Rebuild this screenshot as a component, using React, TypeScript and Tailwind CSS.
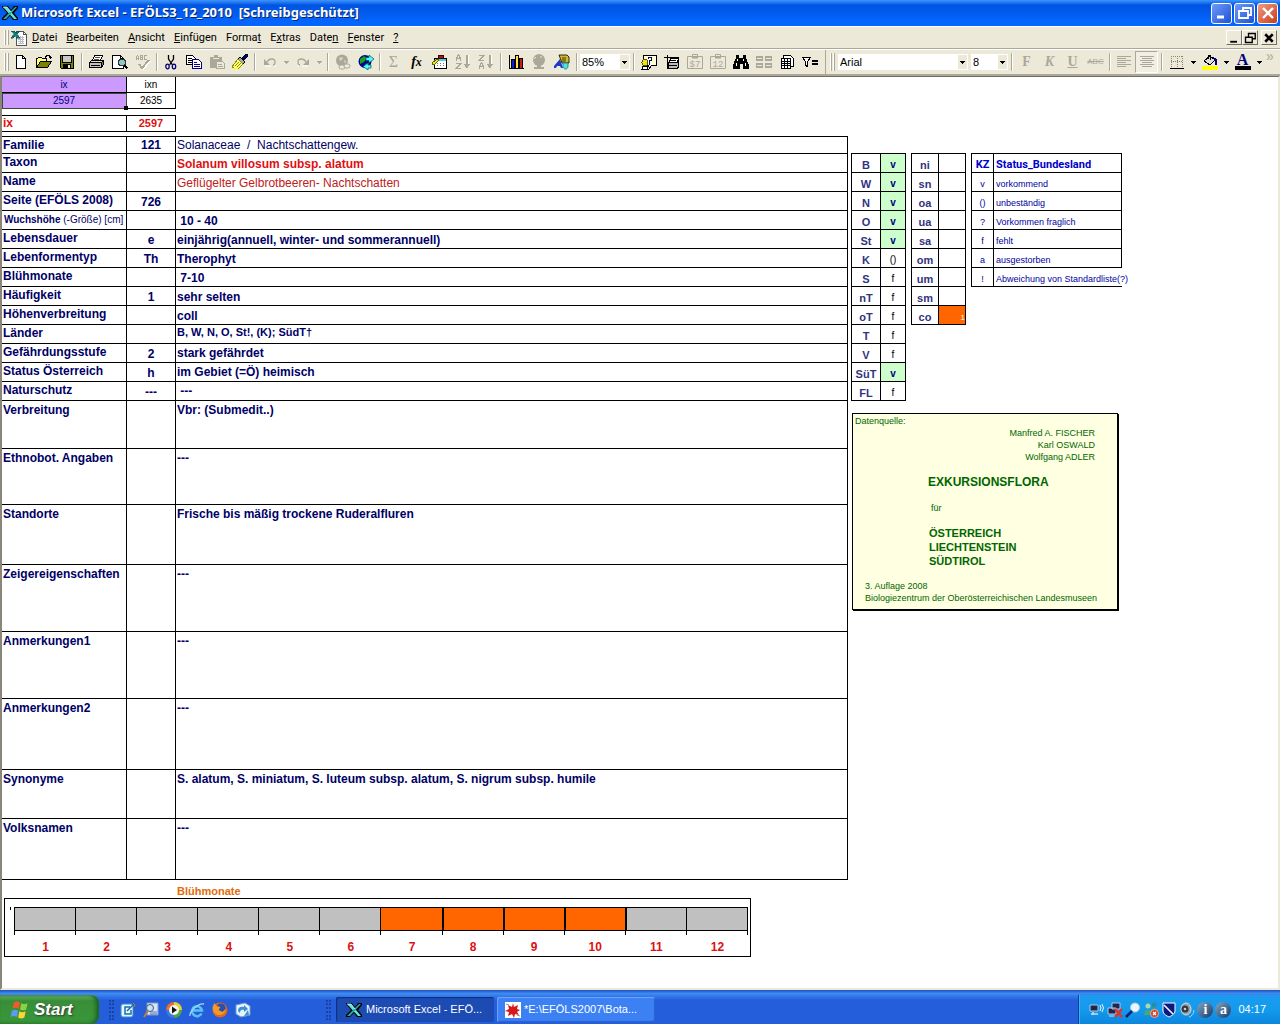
import type { ReactNode } from 'react';
import clsx from 'clsx';

type IconProps = { children: ReactNode; size?: string; smooth?: boolean };

const Icon = ({ children, size = 'size-4', smooth = false }: IconProps) => (
  <svg
    viewBox="0 0 16 16"
    className={clsx('shrink-0', size)}
    shapeRendering={smooth ? 'auto' : 'crispEdges'}
    fill="none"
    aria-hidden="true"
  >
    {children}
  </svg>
);

const ExcelLogo = () => (
  <Icon smooth>
    <path d="M0 1h6l3 4 3-4h4v2l-4 5 4 5v2h-5l-3-4-4 4H0v-2l5-5-5-6z" fill="#000" />
    <path d="M1 2h4l10 12h-3z" fill="#5fe6d8" />
    <path d="M13 2h2L4 14H1z" fill="#2aa8a4" />
    <path d="M1 2h4l4 5" stroke="#cff" strokeWidth=".8" />
  </Icon>
);

const BookIcon = () => (
  <Icon>
    <path d="M5 1h7l3 3v11H5z" fill="#fff" stroke="#555" />
    <path d="M12 1v3h3" stroke="#555" />
    <path d="M7 7h6M7 9h6M7 11h6M7 13h6M9 6v8M11 6v8" stroke="#b9bdc4" />
    <path d="M0 1h3l2 2 2-2h2L6 4l3 4H6L4 6 2 8H0l3-4z" fill="#0d8080" stroke="#003c3c" strokeWidth=".5" />
  </Icon>
);

const NewIcon = () => (
  <Icon>
    <path d="M3.5 1.5h6l3 3v10h-9z" fill="#fff" stroke="#000" />
    <path d="M9.5 1.5v3h3" stroke="#000" />
  </Icon>
);

const OpenIcon = () => (
  <Icon>
    <path d="M.5 13.5v-9h1l1-1h3l1 1h4v3" fill="#ffff80" stroke="#000" />
    <path d="M.5 13.5l4-6h11l-4 6z" fill="#808000" stroke="#000" />
    <path d="M9.5 3.5v-1h1v-1h3v1h1v2M12.5 3.5h3" stroke="#000" />
  </Icon>
);

const SaveIcon = () => (
  <Icon>
    <path d="M1.5 1.5h13v13h-12l-1-1z" fill="#808000" stroke="#000" />
    <path d="M4 2h8v6H4z" fill="#c8c8c8" />
    <path d="M4 10h8v5H4z" fill="#000" />
    <path d="M9 11h2v3H9z" fill="#e8e8e8" />
    <path d="M3.5 2v6.5h9V2" stroke="#000" />
  </Icon>
);

const PrintIcon = () => (
  <Icon>
    <path d="M5.5 1.5h8l-2 5h-8z" fill="#fff" stroke="#000" />
    <path d="M6 3.5h5M5 5.5h5" stroke="#555" />
    <path d="M.5 8.5l2-2h12l-2 2z" fill="#ddd" stroke="#000" />
    <path d="M.5 8.5h12v5H.5z" fill="#c0c0c0" stroke="#000" />
    <path d="M12.5 8.5l2-2v4l-2 3z" fill="#808080" stroke="#000" />
    <path d="M2 11.5h9" stroke="#000" />
    <path d="M9 9.5h2" stroke="#cc0" />
  </Icon>
);

const PreviewIcon = () => (
  <Icon>
    <path d="M.5 1.5h8l3 3v10H.5z" fill="#fff" stroke="#000" />
    <path d="M8.5 1.5v3h3" stroke="#000" />
    <circle cx="10" cy="8.5" r="3.5" fill="#8fc7c7" stroke="#333" />
    <path d="M12.5 11.5l3 3" stroke="#000" strokeWidth="2" />
  </Icon>
);

const SpellIcon = () => (
  <Icon>
    <path
      d="M1.5 6V2.5l1-1 1 1V6M1.5 4.5h2M5.5 1v5M5.5 1.5h2v4h-2M5.5 3.5h2M12 1.5H9.5v4H12"
      stroke="#aca899"
    />
    <path d="M5 11l3 4 7-8" stroke="#fff" strokeWidth="2" />
    <path d="M4 10l3 4 7-8" stroke="#aca899" strokeWidth="2" />
  </Icon>
);

const CutIcon = () => (
  <Icon smooth>
    <path d="M5.5 1v4l4 6M10.5 1v4l-4 6" stroke="#000" strokeWidth="1.3" />
    <ellipse cx="4.5" cy="12.5" rx="1.7" ry="2.3" stroke="#000080" strokeWidth="1.3" />
    <ellipse cx="11" cy="12.5" rx="1.7" ry="2.3" stroke="#000080" strokeWidth="1.3" />
  </Icon>
);

const CopyIcon = () => (
  <Icon>
    <path d="M.5 1.5h6l3 3v6h-9z" fill="#fff" stroke="#000" />
    <path d="M2 4.5h4M2 6.5h5M2 8.5h5" stroke="#000" />
    <path d="M6.5 5.5h6l3 3v6h-9z" fill="#fff" stroke="#000080" />
    <path d="M8 8.5h3M8 10.5h6M8 12.5h6" stroke="#000080" />
  </Icon>
);

const PasteIcon = () => (
  <Icon>
    <path d="M1 3h4V1h4v2h4v11H1z" fill="#aca899" />
    <path d="M4 4.5h6" stroke="#ece9d8" />
    <path d="M7.5 7.5h6l2 2v5h-8z" fill="#ece9d8" stroke="#aca899" />
    <path d="M9 10.5h4M9 12.5h5" stroke="#aca899" />
  </Icon>
);

const BrushIcon = () => (
  <Icon>
    <path d="M10 4l4-4h2v2l-4 4z" fill="#000080" stroke="#000" />
    <path d="M8 3l5 5-2 2-5-5z" fill="#aaa" stroke="#000" />
    <path d="M6 5l5 5-4 4H2l-2-1z" fill="#ffff60" stroke="#8a8a20" />
    <path d="M3 12l4-4M5 13l4-4" stroke="#8a8a20" />
    <path d="M1 14.5h5" stroke="#ff0" />
  </Icon>
);

const UndoIcon = ({ flip = false }: { flip?: boolean }) => (
  <svg
    viewBox="0 0 16 16"
    className={clsx('size-4 shrink-0', flip && '-scale-x-100')}
    fill="none"
    aria-hidden="true"
  >
    <path d="M2 5v6h6z" fill="#aca899" />
    <path d="M5 8c2-4 8-4 8 0 0 2-1 3-2 3" stroke="#aca899" strokeWidth="1.3" />
    <path d="M3 12h6M12 12h2" stroke="#fff" />
  </svg>
);

const LinkIcon = () => (
  <Icon smooth>
    <circle cx="7" cy="6.5" r="6" fill="#aca899" />
    <path d="M4 4l3-1 1 2-3 2zM9 6l2 1-1 3z" fill="#d8d4c4" />
    <rect x="4" y="11" width="6" height="4" rx="2" fill="#ece9d8" stroke="#aca899" />
    <rect x="9" y="10" width="6" height="4" rx="2" fill="#ece9d8" stroke="#aca899" />
  </Icon>
);

const GlobeIcon = () => (
  <Icon smooth>
    <circle cx="7" cy="7.5" r="6.5" fill="#000090" />
    <path d="M2 5l4-3 3 2-3 4-4 2zM7 10l4-1-1 4-3 1z" fill="#17a317" />
    <path d="M8 3.5h3V1l5 4-5 4V6.5H8z" fill="#4ff" stroke="#005050" strokeWidth=".7" />
    <path d="M13 11h-3V9l-5 3.5L10 16v-2h3z" fill="#4ff" stroke="#005050" strokeWidth=".7" />
  </Icon>
);

const FunctionIcon = () => (
  <Icon>
    <path d="M2.5 4.5h12v10h-12z" fill="#fff" stroke="#000" />
    <path d="M3 5h11v2H3z" fill="#3fd6e8" />
    <path d="M5 9.5h8M5 11.5h8" stroke="#777" strokeDasharray="1 2" />
    <path d="M6 1h5v3H6z" fill="#a01818" stroke="#400" />
    <path d="M0 9l5-4 2 1-4 4-2 1z" fill="#e8e820" stroke="#660" />
  </Icon>
);

const SortIcon = ({ descending = false }: { descending?: boolean }) => (
  <Icon>
    {descending ? (
      <path d="M1 1.5h5L1.5 6.5H6M1.5 15v-3l2-3 2 3v3M2 12.5h3" stroke="#aca899" strokeWidth="1.5" />
    ) : (
      <path d="M1.5 7V4l2-3 2 3v3M2 4.5h3M1 9.5h5l-4.5 5H6" stroke="#aca899" strokeWidth="1.5" />
    )}
    <path d="M12 1v10" stroke="#aca899" strokeWidth="2" />
    <path d="M9 10h6l-3 5z" fill="#aca899" />
    <path d="M13.5 1v9" stroke="#fff" />
  </Icon>
);

const ChartIcon = () => (
  <Icon>
    <path d="M1.5 1v13.5H16" stroke="#000" />
    <path d="M3.5 5.5h3v9h-3z" fill="#1818d0" stroke="#000" />
    <path d="M7.5 1.5h3v13h-3z" fill="#ffe840" stroke="#000" />
    <path d="M11.5 4.5h3v10h-3z" fill="#d01818" stroke="#000" />
  </Icon>
);

const MapIcon = () => (
  <Icon smooth>
    <circle cx="8" cy="6" r="6" fill="#aca899" />
    <path d="M6 10h4v3h3v2H3v-2h3z" fill="#aca899" />
    <path d="M3 5l2-2M9 3h2" stroke="#ece9d8" />
  </Icon>
);

const DrawingIcon = () => (
  <Icon smooth>
    <path d="M5 1h8l2 2v6H8z" fill="#d8b828" stroke="#000" strokeWidth=".8" />
    <path d="M8 3h4v5H8z" fill="#8a7a10" />
    <path d="M0 12l6-7 3 9H7l-1-2H3l-1 2H0z" fill="#1a3cc8" />
    <path d="M9 9h5v3c0 4-5 4-5 0z" fill="#50e0e8" stroke="#087880" strokeWidth=".8" />
  </Icon>
);

const HelpIcon = () => (
  <Icon>
    <path d="M2.5 1.5h13v10h-5l-2 3-1-3h-5z" fill="#ffffd8" stroke="#000" />
    <path d="M7.5 5V3.5h3v3h-2v2M8.5 9v1.5" stroke="#000080" strokeWidth="1.5" />
    <circle cx="4" cy="8.5" r="3" fill="#f0e020" stroke="#555500" />
    <path d="M2 12h4l1 3H1z" fill="#fff" stroke="#000" />
  </Icon>
);

const CameraPrintIcon = () => (
  <Icon>
    <path d="M0 3.5h15M3.5 1v14" stroke="#000" />
    <path d="M6.5 4.5h8l-1 4h-8z" fill="#fff" stroke="#000" />
    <path d="M4.5 8.5h9l1-2v6l-1 2h-9z" fill="#bbb" stroke="#000" />
    <path d="M5 11.5h8M7 6.5h5" stroke="#000" />
  </Icon>
);

const ClipIcon = ({ label }: { label: string }) => (
  <svg viewBox="0 0 16 16" className="size-4 shrink-0" fill="none" aria-hidden="true">
    <path d="M.5 2.5h15v12H.5zM5.5 2.5v-2h5v2" stroke="#aca899" />
    <path d="M5 3.5h6" stroke="#aca899" strokeWidth="2" />
    <text x="8" y="13" textAnchor="middle" fontSize="9" fill="#aca899" fontFamily="Liberation Mono, monospace">
      {label}
    </text>
  </svg>
);

const BinocularsIcon = () => (
  <Icon>
    <path d="M3 1h3v3h4V1h3v3l3 7v4h-6v-5H7v5H0v-4l3-7z" fill="#000" />
    <path d="M4 5v2M3 9v3M10 5v2M12 9v3" stroke="#fff" />
  </Icon>
);

const FreezeIcon = () => (
  <Icon>
    <path d="M0 2h7v5H0zM9 2h7v5H9zM0 9h7v5H0zM9 9h7v5H9z" fill="#aca899" />
    <path d="M1 4.5h5M10 4.5h5M1 11.5h5M10 11.5h5" stroke="#ece9d8" />
  </Icon>
);

const SheetsIcon = () => (
  <Icon>
    <path d="M4.5 1.5h7l3 3v8h-10z" fill="#fff" stroke="#000" />
    <path d="M2.5 4.5h9v10h-9z" fill="#fff" stroke="#000" />
    <path d="M3 7.5h8M3 9.5h8M3 11.5h8M5.5 5v9M8.5 5v9" stroke="#000" />
  </Icon>
);

const FilterIcon = () => (
  <Icon>
    <path d="M.5 3.5h8l-3 4v5l-2-1v-4z" fill="#fff" stroke="#000" />
    <path d="M10 7h6M10 10h6" stroke="#000" strokeWidth="2" />
  </Icon>
);

const AlignIcon = ({ center = false }: { center?: boolean }) => (
  <Icon>
    <path
      d={
        center
          ? 'M1 2.5h14M3 4.5h10M1 6.5h14M3 8.5h10M1 10.5h14M3 12.5h10'
          : 'M1 2.5h14M1 4.5h9M1 6.5h14M1 8.5h9M1 10.5h14M1 12.5h9'
      }
      stroke="#aca899"
    />
  </Icon>
);

const BordersIcon = () => (
  <Icon>
    <path d="M2 2.5h12M2 7.5h12M2.5 2v11M8.5 2v11M13.5 2v11" stroke="#8a8778" strokeDasharray="1 1" />
    <path d="M1 14.5h14" stroke="#000" />
  </Icon>
);

const FillIcon = () => (
  <Icon>
    <path d="M2 7l6-5 5 4-5 5z" fill="#ddd" stroke="#000" />
    <path d="M6 5V1h2v5" stroke="#000" />
    <path d="M11 3l4 2v6h-2V7z" fill="#000080" />
    <path d="M0 12h16v4H0z" fill="#ff0" />
  </Icon>
);

const DownArrow = () => (
  <svg viewBox="0 0 5 3" className="h-[3px] w-[5px] shrink-0" shapeRendering="crispEdges" aria-hidden="true">
    <path d="M0 0h5v1H4v1H3v1H2V2H1V1H0z" fill="currentColor" />
  </svg>
);

const Grip = () => (
  <span className="flex w-[5px] shrink-0 justify-between self-stretch py-[3px]">
    <i className="w-0.5 border-r border-[#aca899] bg-white" />
    <i className="w-0.5 border-r border-[#aca899] bg-white" />
  </span>
);

const Separator = ({ narrow }: { narrow?: boolean }) => (
  <span className={clsx('flex shrink-0 justify-center self-stretch py-[3px]', narrow ? 'w-[5px]' : 'w-[7px]')}>
    <i className="w-0.5 border-l border-[#aca899] bg-white" />
  </span>
);

type ToolProps = { label: string; children: ReactNode; active?: boolean };

const Tool = ({ label, children, active }: ToolProps) => (
  <button
    type="button"
    aria-label={label}
    title={label}
    className={clsx(
      'flex h-[22px] w-[23px] shrink-0 items-center justify-center',
      active && 'border border-[#aca899] border-r-white border-b-white bg-[#f1efe3]'
    )}
  >
    {children}
  </button>
);

const DropButton = ({ label, muted }: { label: string; muted?: boolean }) => (
  <button
    type="button"
    aria-label={label}
    className={clsx(
      'flex h-[22px] w-2.5 shrink-0 items-center justify-center',
      muted ? 'text-[#aca899]' : 'text-black'
    )}
  >
    <DownArrow />
  </button>
);

const Combo = ({ label, value, width }: { label: string; value: string; width: string }) => (
  <span className={clsx('flex h-4 shrink-0 items-stretch bg-white', width)}>
    <select
      aria-label={label}
      defaultValue={value}
      className="min-w-0 flex-1 appearance-none bg-white pl-0.5 text-[11px] leading-4"
    >
      <option>{value}</option>
    </select>
    <span className="my-px mr-px flex w-[9px] items-center justify-center bg-[#ece9d8]">
      <DownArrow />
    </span>
  </span>
);

const TitleBar = () => (
  <header className="flex h-[26px] items-center bg-linear-to-b from-[#3d95ff] via-[#0053e1] via-20% to-[#0566ff] to-85% pr-0.5 pl-0.5">
    <ExcelLogo />
    <h1 className="ml-[3px] flex-1 truncate whitespace-pre font-['Noto_Sans',sans-serif] text-[13px] font-bold text-white [text-shadow:1px_1px_#0a246a]">
      {'Microsoft Excel - EFÖLS3_12_2010  [Schreibgeschützt]'}
    </h1>
    <div className="flex gap-0.5">
      {[
        { label: 'Minimieren', path: 'M3 12h7', width: 3, close: false },
        { label: 'Wiederherstellen', path: 'M6 6V3h8v7h-3M2 6h9v7H2z', width: 1.8, close: false },
        { label: 'Schließen', path: 'M3 3l10 10M13 3L3 13', width: 2.4, close: true },
      ].map(item => (
        <button
          key={item.label}
          type="button"
          aria-label={item.label}
          className={clsx(
            'flex size-[21px] items-center justify-center rounded-[3px] border border-white bg-linear-to-br',
            item.close ? 'from-[#f09a80] to-[#c63a12]' : 'from-[#6f9bf4] to-[#1c50d8]'
          )}
        >
          <Icon smooth>
            <path d={item.path} stroke="#fff" strokeWidth={item.width} />
          </Icon>
        </button>
      ))}
    </div>
  </header>
);

// [before, access key, after]
const menus = [
  ['', 'D', 'atei'],
  ['', 'B', 'earbeiten'],
  ['', 'A', 'nsicht'],
  ['', 'E', 'infügen'],
  ['Forma', 't', ''],
  ['E', 'x', 'tras'],
  ['Date', 'n', ''],
  ['', 'F', 'enster'],
  ['', '?', ''],
];

const MenuBar = () => (
  <nav className="flex h-[23px] items-center border-t border-b border-t-white border-b-[#aca899] bg-[#ece9d8] pr-[3px] pl-1">
    <Grip />
    <span className="ml-0.5">
      <BookIcon />
    </span>
    <div className="flex flex-1 font-['Roboto',sans-serif]">
      {menus.map(([before, key, after]) => (
        <button key={before + key + after} type="button" className="pr-1 pl-[5px] text-[11px] leading-4">
          {before}
          <span className="underline underline-offset-1">{key}</span>
          {after}
        </button>
      ))}
    </div>
    <div className="flex">
      {[
        { label: 'Mappe minimieren', path: 'M3 13h9', width: 2.5, gap: '' },
        { label: 'Mappe wiederherstellen', path: 'M6 6V2h9v7h-4M2 7h9v7H2z', width: 1.8, gap: '' },
        { label: 'Mappe schließen', path: 'M3 3l10 10M13 3L3 13', width: 3.4, gap: 'ml-[3px]' },
      ].map(item => (
        <button
          key={item.label}
          type="button"
          aria-label={item.label}
          className={clsx(
            'flex h-[15px] w-4 items-center justify-center border border-white border-r-[#716f64] border-b-[#716f64]',
            item.gap
          )}
        >
          <Icon size="size-3" smooth>
            <path d={item.path} stroke="#000" strokeWidth={item.width} />
          </Icon>
        </button>
      ))}
    </div>
  </nav>
);

const Toolbar = () => (
  <div
    role="toolbar"
    className="flex h-[27px] items-center overflow-hidden border-t border-b-2 border-t-white border-b-[#aca899] bg-[#ece9d8] pl-1"
  >
    <Grip />
    <Tool label="Neu"><NewIcon /></Tool>
    <Tool label="Öffnen"><OpenIcon /></Tool>
    <Tool label="Speichern"><SaveIcon /></Tool>
    <Separator />
    <Tool label="Drucken"><PrintIcon /></Tool>
    <Tool label="Seitenansicht"><PreviewIcon /></Tool>
    <Tool label="Rechtschreibung"><SpellIcon /></Tool>
    <Separator narrow />
    <Tool label="Ausschneiden"><CutIcon /></Tool>
    <Tool label="Kopieren"><CopyIcon /></Tool>
    <Tool label="Einfügen"><PasteIcon /></Tool>
    <Tool label="Format übertragen"><BrushIcon /></Tool>
    <Separator />
    <Tool label="Rückgängig"><UndoIcon /></Tool>
    <DropButton label="Rückgängig-Liste" muted />
    <Tool label="Wiederholen"><UndoIcon flip /></Tool>
    <DropButton label="Wiederholen-Liste" muted />
    <Separator />
    <Tool label="Hyperlink"><LinkIcon /></Tool>
    <Tool label="Web"><GlobeIcon /></Tool>
    <Separator narrow />
    <Tool label="AutoSumme">
      <span className="font-['Liberation_Serif',serif] text-base text-[#aca899]">Σ</span>
    </Tool>
    <Tool label="Funktion">
      <span className="font-['Liberation_Serif',serif] text-sm font-bold italic">
        f<span className="text-xs">x</span>
      </span>
    </Tool>
    <Tool label="Funktion einfügen"><FunctionIcon /></Tool>
    <Tool label="Aufsteigend"><SortIcon /></Tool>
    <Tool label="Absteigend"><SortIcon descending /></Tool>
    <Separator />
    <Tool label="Diagramm"><ChartIcon /></Tool>
    <Tool label="Karte"><MapIcon /></Tool>
    <Tool label="Zeichnen"><DrawingIcon /></Tool>
    <Separator />
    <Combo label="Zoom" value="85%" width="w-[50px]" />
    <Separator />
    <Tool label="Hilfe"><HelpIcon /></Tool>
    <Tool label="Druckbereich"><CameraPrintIcon /></Tool>
    <Tool label="Währung"><ClipIcon label="$7" /></Tool>
    <Tool label="Werte"><ClipIcon label="12" /></Tool>
    <Tool label="Suchen"><BinocularsIcon /></Tool>
    <Tool label="Fenster fixieren"><FreezeIcon /></Tool>
    <Tool label="Tabellen"><SheetsIcon /></Tool>
    <Tool label="AutoFilter"><FilterIcon /></Tool>
    <span className="ml-1 w-[5px] shrink-0 self-stretch border-l border-[#aca899]" />
    <Grip />
    <span className="ml-[3px] flex gap-[3px]">
      <Combo label="Schriftart" value="Arial" width="w-[130px]" />
      <Combo label="Schriftgrad" value="8" width="w-[37px]" />
    </span>
    <Separator />
    <span className="flex font-['Liberation_Serif',serif] text-sm text-[#aca899]">
      <Tool label="Fett"><b>F</b></Tool>
      <Tool label="Kursiv"><b><i>K</i></b></Tool>
      <Tool label="Unterstrichen"><b className="underline">U</b></Tool>
      <Tool label="Durchgestrichen">
        <s className="font-['Liberation_Sans',sans-serif] text-[8px]">ABC</s>
      </Tool>
    </span>
    <Separator narrow />
    <Tool label="Linksbündig"><AlignIcon /></Tool>
    <Tool label="Zentriert" active><AlignIcon center /></Tool>
    <Separator />
    <Tool label="Rahmen"><BordersIcon /></Tool>
    <DropButton label="Rahmenliste" />
    <Tool label="Füllfarbe"><FillIcon /></Tool>
    <DropButton label="Füllfarbenliste" />
    <Tool label="Schriftfarbe">
      <span className="w-4 border-b-4 border-black text-center font-['Liberation_Serif',serif] text-base leading-3 font-bold text-[#000080]">
        A
      </span>
    </Tool>
    <DropButton label="Schriftfarbenliste" />
    <span className="ml-0.5 self-start text-sm leading-3 text-[#aca899]">»</span>
  </div>
);

type Row = {
  label: ReactNode;
  code?: string;
  value?: string;
  height: string;
  style?: string;
  tall?: boolean;
};

const small = 'h-[19px]';

const rows: Row[] = [
  { label: 'Familie', code: '121', value: 'Solanaceae  /  Nachtschattengew.', height: 'h-[17px]', style: 'align-bottom font-normal' },
  { label: 'Taxon', value: 'Solanum villosum subsp. alatum', height: small, style: 'align-bottom text-[#e01010]' },
  { label: 'Name', value: 'Geflügelter Gelbrotbeeren- Nachtschatten', height: small, style: 'align-bottom font-normal text-[#c02020]' },
  { label: 'Seite (EFÖLS 2008)', code: '726', height: small },
  {
    label: (
      <span className="block pl-px text-[10px] leading-[15px] whitespace-nowrap">
        Wuchshöhe <span className="font-normal">(-Größe) [cm]</span>
      </span>
    ),
    value: ' 10 - 40',
    height: small,
  },
  { label: 'Lebensdauer', code: 'e', value: 'einjährig(annuell, winter- und sommerannuell)', height: small },
  { label: 'Lebenformentyp', code: 'Th', value: 'Therophyt', height: small },
  { label: 'Blühmonate', value: ' 7-10', height: small },
  { label: 'Häufigkeit', code: '1', value: 'sehr selten', height: small },
  { label: 'Höhenverbreitung', value: 'coll', height: small },
  { label: 'Länder', value: 'B, W, N, O, St!, (K); SüdT†', height: small, style: 'align-top text-[11px]' },
  { label: 'Gefährdungsstufe', code: '2', value: 'stark gefährdet', height: small, style: 'align-middle' },
  { label: 'Status Österreich', code: 'h', value: 'im Gebiet (=Ö) heimisch', height: small, style: 'align-middle' },
  { label: 'Naturschutz', code: '---', value: ' ---', height: small, style: 'align-middle' },
  { label: 'Verbreitung', value: 'Vbr: (Submedit..)', height: 'h-12', tall: true },
  { label: 'Ethnobot. Angaben', value: '---', height: 'h-14', tall: true },
  { label: 'Standorte', value: 'Frische bis mäßig trockene Ruderalfluren', height: 'h-[60px]', tall: true },
  { label: 'Zeigereigenschaften', value: '---', height: 'h-[67px]', tall: true },
  { label: 'Anmerkungen1', value: '---', height: 'h-[67px]', tall: true },
  { label: 'Anmerkungen2', value: '---', height: 'h-[71px]', tall: true },
  {
    label: 'Synonyme',
    value: 'S. alatum, S. miniatum, S. luteum subsp. alatum, S. nigrum subsp. humile',
    height: 'h-[49px]',
    tall: true,
  },
  { label: 'Volksnamen', value: '---', height: 'h-[61px]', tall: true },
];

const cell = 'border-r border-b border-black';

const IndexTables = () => (
  <>
    <table className="w-[174px] table-fixed border-separate border-spacing-0 text-center text-[10px] leading-[14px]">
      <tbody>
        <tr className="h-4">
          <td className={clsx(cell, 'w-[125px] bg-[#cc99ff] text-[#000080]')}>ix</td>
          <td className={cell}>ixn</td>
        </tr>
        <tr className="h-4">
          <td className={clsx(cell, 'relative bg-[#cc99ff] text-[#000080] outline outline-[#3a4a3a] -outline-offset-1')}>
            2597
            <i className="absolute -right-0.5 -bottom-0.5 size-1 bg-black" />
          </td>
          <td className={cell}>2635</td>
        </tr>
      </tbody>
    </table>
    <table className="mt-1.5 w-[174px] table-fixed border-separate border-spacing-0 border-t border-black text-[11px] leading-[15px] font-bold text-[#e01010]">
      <tbody>
        <tr className="h-4">
          <th scope="row" className={clsx(cell, 'w-[125px] pl-px text-left text-xs leading-[15px]')}>ix</th>
          <td className={clsx(cell, 'text-center')}>2597</td>
        </tr>
      </tbody>
    </table>
  </>
);

const SpeciesTable = () => (
  <table className="mt-1 w-full table-fixed border-separate border-spacing-0 border-t border-black text-xs leading-[15px] font-bold text-[#000066]">
    <colgroup>
      <col className="w-[125px]" />
      <col className="w-[49px]" />
      <col />
    </colgroup>
    <tbody>
      {rows.map((row, index) => (
        <tr key={index} className={row.height}>
          <th scope="row" className={clsx(cell, 'pl-px text-left align-top', row.tall ? 'pt-0.5' : 'pt-px')}>
            {row.label}
          </th>
          <td className={clsx(cell, 'text-center align-bottom')}>{row.code}</td>
          <td
            className={clsx(
              cell,
              'pl-px whitespace-pre',
              row.tall ? 'pt-0.5 align-top' : (row.style ?? 'align-bottom')
            )}
          >
            {row.value}
          </td>
        </tr>
      ))}
    </tbody>
  </table>
);

const FloweringChart = () => (
  <section>
    <h2 className="mt-1 pl-[175px] text-[11px] leading-[14px] font-bold text-[#e26b0a]">Blühmonate</h2>
    <div className="mr-[97px] ml-0.5 flex items-start border border-black pt-2 pr-0.5 pb-px">
      <span className="mr-[3px] ml-[5px] h-[3px] w-px bg-black" />
      <span className="h-7 w-px bg-black" />
      <ol className="grid flex-1 grid-cols-12 text-center text-xs font-bold text-[#e01010]">
        {Array.from({ length: 12 }, (_, i) => i + 1).map(month => (
          <li key={month}>
            <div
              className={clsx(
                'h-6 border-y border-r border-black',
                month >= 7 && month <= 10 ? 'bg-[#ff6600]' : 'bg-[#c0c0c0]',
                month >= 8 && month <= 11 && 'border-l'
              )}
            />
            <div className="h-1 border-r border-black" />
            <div className="pt-[5px] leading-[15px]">{month}</div>
          </li>
        ))}
      </ol>
    </div>
  </section>
);

const regions = [
  ['B', 'v'], ['W', 'v'], ['N', 'v'], ['O', 'v'], ['St', 'v'], ['K', '()'], ['S', 'f'],
  ['nT', 'f'], ['oT', 'f'], ['T', 'f'], ['V', 'f'], ['SüT', 'v'], ['FL', 'f'],
];

const altitudes = ['ni', 'sn', 'oa', 'ua', 'sa', 'om', 'um', 'sm', 'co'];

const legend = [
  ['v', 'vorkommend'],
  ['()', 'unbeständig'],
  ['?', 'Vorkommen fraglich'],
  ['f', 'fehlt'],
  ['a', 'ausgestorben'],
  ['!', 'Abweichung von Standardliste(?)'],
];

const sideTable = 'table-fixed border-separate border-spacing-0 border-t border-l border-black text-center leading-[14px]';

const SideTables = () => (
  <div className="flex items-start gap-[5px]">
    <table className={clsx(sideTable, 'w-[55px]')}>
      <tbody>
        {regions.map(([region, status]) => (
          <tr key={region} className="h-[19px]">
            <th scope="row" className={clsx(cell, 'w-[29px] align-bottom text-[11px] text-[#333380]')}>{region}</th>
            <td
              className={clsx(
                cell,
                'align-bottom text-[10px]',
                status === 'v' && 'bg-[#ccffcc] font-bold text-[#000080]'
              )}
            >
              {status}
            </td>
          </tr>
        ))}
      </tbody>
    </table>
    <table className={clsx(sideTable, 'w-[55px]')}>
      <tbody>
        {altitudes.map(name => (
          <tr key={name} className="h-[19px]">
            <th scope="row" className={clsx(cell, 'w-[27px] align-bottom text-[11px] text-[#333380]')}>{name}</th>
            <td className={clsx(cell, name === 'co' && 'bg-[#ff6600] text-right align-bottom text-[8px] leading-3 text-white')}>
              {name === 'co' && '1'}
            </td>
          </tr>
        ))}
      </tbody>
    </table>
    <table className={clsx(sideTable, 'w-[151px] text-[9px] text-[#0000a0]')}>
      <thead>
        <tr className="h-[19px] font-['Roboto',sans-serif] text-[11px] text-[#0000cc]">
          <th scope="col" className={clsx(cell, 'w-[22px] align-bottom')}>KZ</th>
          <th scope="col" className={clsx(cell, 'pl-0.5 text-left align-bottom')}>Status_Bundesland</th>
        </tr>
      </thead>
      <tbody>
        {legend.map(([sign, meaning]) => (
          <tr key={sign} className="h-[19px]">
            <td className={clsx(cell, 'align-bottom')}>{sign}</td>
            <td
              className={clsx(
                'border-b border-black pl-0.5 text-left align-bottom whitespace-nowrap',
                sign !== '!' && 'border-r'
              )}
            >
              {meaning}
            </td>
          </tr>
        ))}
      </tbody>
    </table>
  </div>
);

const SourceNote = () => (
  <aside className="mt-3 ml-px w-[266px] border border-black bg-[#ffffe1] pt-px pb-[5px] pl-0.5 text-[9px] leading-3 text-[#006600] shadow-[1px_1px_#000]">
    <p>Datenquelle:</p>
    <p className="pr-[22px] text-right">
      Manfred A. FISCHER
      <br />
      Karl OSWALD
      <br />
      Wolfgang ADLER
    </p>
    <p className="mt-3 pl-[73px] text-xs leading-[15px] font-bold">EXKURSIONSFLORA</p>
    <p className="mt-3 pl-[76px]">für</p>
    <p className="mt-3 pl-[74px] text-[11px] leading-[14px] font-bold">
      ÖSTERREICH
      <br />
      LIECHTENSTEIN
      <br />
      SÜDTIROL
    </p>
    <p className="mt-3 pl-2.5 whitespace-nowrap">
      3. Auflage 2008
      <br />
      Biologiezentrum der Oberösterreichischen Landesmuseen
    </p>
  </aside>
);

const StartFlag = () => (
  <Icon size="size-5" smooth>
    <path d="M3 2c2-1 3-1 5 0L7 7c-2-1-3-1-5 0z" fill="#f0592b" />
    <path d="M9 2.5c2 1 3 1 5 0l-1 5c-2 1-3 1-5 0z" fill="#8fd13f" />
    <path d="M1.5 8.5c2-1 3-1 5 0l-1 5c-2-1-3-1-5 0z" fill="#5a9cf0" />
    <path d="M7.5 9c2 1 3 1 5 0l-1 5c-2 1-3 1-5 0z" fill="#ffd43a" />
  </Icon>
);

const quickLaunch = [
  {
    label: 'Desktop anzeigen',
    art: (
      <>
        <rect x="1" y="2" width="12" height="13" rx="2" fill="#e6f3fb" stroke="#3b8cc4" />
        <path d="M10 5H5v7h6V8M7 9l7-7" stroke="#1670b4" strokeWidth="1.5" />
        <path d="M13 1l2 2-1 2" stroke="#d07020" />
      </>
    ),
  },
  {
    label: 'Suche',
    art: (
      <>
        <path d="M4 1h11v12H4z" fill="#d6e4fa" stroke="#7d97cf" />
        <path d="M7 10h7M7 12h7" stroke="#5571b5" />
        <circle cx="7" cy="6" r="3.5" fill="#bfe6f5" stroke="#556" />
        <path d="M5 9l-4 6" stroke="#c08040" strokeWidth="2" />
      </>
    ),
  },
  {
    label: 'Media Player',
    art: (
      <>
        <path d="M8 8V0a8 8 0 0 1 8 8z" fill="#e8d030" />
        <path d="M8 8h8a8 8 0 0 1-8 8z" fill="#4aa83c" />
        <path d="M8 8v8a8 8 0 0 1-8-8z" fill="#3e78d8" />
        <path d="M8 8H0a8 8 0 0 1 8-8z" fill="#e4702a" />
        <circle cx="8" cy="8" r="5" fill="#f4f4f4" />
        <path d="M6 4.5v7l5-3.5z" fill="#111" />
      </>
    ),
  },
  {
    label: 'Internet Explorer',
    art: (
      <>
        <path d="M12.5 11.5A5 5 0 1 1 13 8.5H4" stroke="#5cc0f8" strokeWidth="2.5" />
        <path d="M1 14C0 10 9 1 15 2" stroke="#9bdcff" strokeWidth="1.3" />
      </>
    ),
  },
  {
    label: 'Firefox',
    art: (
      <>
        <circle cx="8" cy="8" r="7.5" fill="#e2661c" />
        <circle cx="9" cy="6" r="4.5" fill="#2c4fa8" />
        <path d="M.5 5l2-4 2 3 4 1-2 3 4 2 3-3c0 4-3 6-6 6-4 0-7-3-7-8z" fill="#f39a2c" />
      </>
    ),
  },
  {
    label: 'Outlook Express',
    art: (
      <>
        <path d="M1 3l9-2 5 3v9l-9 2-5-3z" fill="#e9f3fc" stroke="#6d9cd0" />
        <path d="M3 9c0-4 3-5 6-4V3l4 4-4 3V8C6 7 5 9 5 11zM13 8l1 5-5 1" fill="#3a8fd6" />
      </>
    ),
  },
];

const trayIcons = [
  {
    label: 'WLAN',
    art: (
      <>
        <path d="M1 3h8v6H1z" fill="#1a2850" stroke="#b7c6e0" />
        <path d="M2 12h7M4 10v3" stroke="#d0d8e8" strokeWidth="1.5" />
        <path d="M11 3q2 3 0 6M13 2q3 4 0 8" stroke="#e8f4ff" />
      </>
    ),
  },
  {
    label: 'Netzwerk getrennt',
    art: (
      <>
        <path d="M5 1h8v6H5zM1 6h8v6H1z" fill="#1a2850" stroke="#b7c6e0" />
        <path d="M2 14h7" stroke="#d0d8e8" />
        <path d="M8 7l7 8M15 7l-7 8" stroke="#e03428" strokeWidth="2.5" />
      </>
    ),
  },
  {
    label: 'Suche',
    art: (
      <>
        <circle cx="10" cy="5.5" r="4.5" fill="#e8f6ff" stroke="#b0c8e0" />
        <path d="M7 9l-6 6" stroke="#10206c" strokeWidth="2.5" />
      </>
    ),
  },
  {
    label: 'Messenger',
    art: (
      <>
        <circle cx="5" cy="4" r="2.5" fill="#a9dca0" />
        <circle cx="11" cy="3" r="2.5" fill="#2c8c9c" />
        <path d="M1 13c0-7 8-7 8 0zM8 8c2-3 7-2 7 3H9z" fill="#4aa878" />
        <circle cx="11.5" cy="11.5" r="4" fill="#dc3a24" stroke="#fff" strokeWidth=".5" />
        <path d="M10 10l3 3M13 10l-3 3" stroke="#fff" strokeWidth="1.3" />
      </>
    ),
  },
  {
    label: 'Virenschutz',
    art: (
      <>
        <path d="M2 1h12v8c0 3-4 5-6 6-2-1-6-3-6-6z" fill="#0c1a80" stroke="#fff" />
        <path d="M3 3l9 9" stroke="#fff" strokeWidth="1.5" />
      </>
    ),
  },
  {
    label: 'Lautstärke',
    art: (
      <>
        <ellipse cx="7" cy="7" rx="5" ry="6" fill="#9a9fa6" stroke="#d8dce0" />
        <circle cx="6" cy="7" r="3.5" fill="#33383e" />
        <circle cx="6" cy="7" r="1.3" fill="#ccc" />
        <path d="M12 14q3-2 3-6M10 15q2 0 3-2" stroke="#9ed4ff" />
      </>
    ),
  },
];

const Handle = () => <span className="h-5 w-[5px] shrink-0 border-x-2 border-dotted border-[#1a43a8]" />;

const taskButton = 'flex h-[25px] w-[158px] items-center rounded-[2px] text-left text-[11px] text-white';

const Taskbar = () => (
  <footer className="flex h-[34px] items-stretch bg-linear-to-b from-[#1f4fb8] via-[#3f8cf3] via-10% to-[#245edb] to-30% pt-[5px]">
    <button
      type="button"
      className="flex w-[99px] items-center gap-1 rounded-r-lg bg-linear-to-b from-[#6cb86a] via-[#388e38] via-20% to-[#3a983a] pl-2.5 text-[17px] font-bold text-white italic shadow-[inset_-3px_0_4px_#1d5f1d] [text-shadow:1px_1px_2px_#333]"
    >
      <StartFlag />
      Start
    </button>
    <div className="ml-2.5 flex items-center">
      <Handle />
      <div className="ml-1.5 flex gap-[7px]">
        {quickLaunch.map(item => (
          <button key={item.label} type="button" aria-label={item.label}>
            <Icon smooth>{item.art}</Icon>
          </button>
        ))}
      </div>
    </div>
    <div className="ml-[75px] flex flex-1 items-center gap-[3px]">
      <Handle />
      <button type="button" className={clsx(taskButton, 'ml-0.5 gap-1 bg-[#1c4bb4] pl-2.5 shadow-[inset_1px_1px_1px_#0e2f7c]')}>
        <ExcelLogo />
        Microsoft Excel - EFÖ...
      </button>
      <button type="button" className={clsx(taskButton, 'gap-[3px] bg-[#3c81f3] pl-2 shadow-[inset_1px_1px_1px_#6ea6ff,inset_-1px_-1px_1px_#2a5fd0]')}>
        <Icon smooth>
          <path d="M0 0h16v16H0z" fill="#fff" />
          <path d="M8 1l1 4 4-2-1 4 3 1-3 2 2 3-4-1-1 4-2-4-4 2 1-4-4-1 4-2-1-4 4 2z" fill="#d81818" />
          <path d="M1 2l3 1M12 13l3 1" stroke="#a88" />
        </Icon>
        *E:\EFÖLS2007\Bota...
      </button>
    </div>
    <div className="flex items-center gap-0.5 border-l border-[#0a3fa0] bg-linear-to-b from-[#1c9af0] via-[#129bee] to-[#0d86dc] pr-3.5 pl-2.5 text-white shadow-[inset_1px_0_#35b8f8]">
      {trayIcons.map(item => (
        <button key={item.label} type="button" aria-label={item.label}>
          <Icon smooth>{item.art}</Icon>
        </button>
      ))}
      {['i', 'a'].map(letter => (
        <button
          key={letter}
          type="button"
          className="size-4 rounded-full bg-linear-to-br from-[#8aa8c0] to-[#123a6c] font-['Liberation_Serif',serif] text-sm leading-[14px] font-bold"
        >
          {letter}
        </button>
      ))}
      <time className="ml-[5px] text-[11px]">04:17</time>
    </div>
  </footer>
);

export default function App() {
  return (
    <div className="flex min-h-screen flex-col bg-white font-['Liberation_Sans',Arial,sans-serif] text-black">
      <TitleBar />
      <MenuBar />
      <Toolbar />
      <main className="flex flex-1 items-start gap-[3px] border-t border-r-2 border-b-2 border-l-2 border-t-[#716f64] border-r-[#ece9d8] border-b-[#ece9d8] border-l-[#8a877a]">
        <div className="flex-1">
          <IndexTables />
          <SpeciesTable />
          <FloweringChart />
        </div>
        <div className="w-[427px] shrink-0 pt-[76px]">
          <SideTables />
          <SourceNote />
        </div>
      </main>
      <Taskbar />
    </div>
  );
}
